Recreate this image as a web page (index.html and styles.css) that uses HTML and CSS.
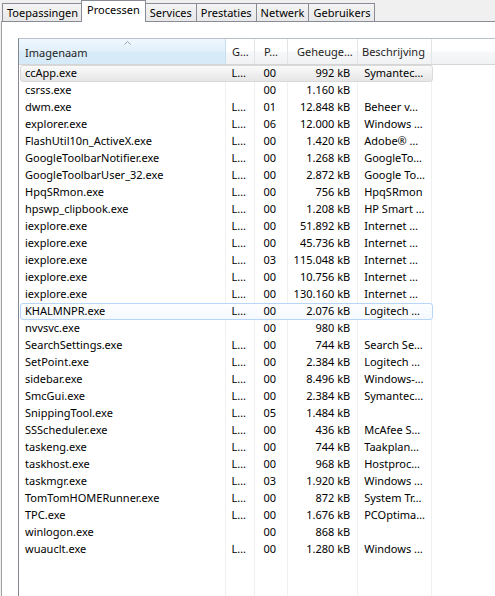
FILE: index.html
```html
<!DOCTYPE html>
<html>
<head>
<meta charset="utf-8">
<link rel="stylesheet" href="styles.css">
</head>
<body>
<div class="tabs">
  <div class="tab">Toepassingen</div>
  <div class="tab active">Processen</div>
  <div class="tab">Services</div>
  <div class="tab">Prestaties</div>
  <div class="tab">Netwerk</div>
  <div class="tab">Gebruikers</div>
</div>
<div class="panel">
  <div class="list">
    <div class="head">
      <div class="hc c1 sorted"><svg class="arrow" width="7" height="4" viewBox="0 0 7 4"><path d="M0.5 3.5 L3.5 0.5 L6.5 3.5" fill="none" stroke="#97a5b9" stroke-width="1"/></svg>Imagenaam</div>
      <div class="hc c2">G…</div>
      <div class="hc c3">P…</div>
      <div class="hc c4">Geheuge…</div>
      <div class="hc c5">Beschrijving</div>
      <div class="hc rest"></div>
    </div>
    <div class="body">
      <div class="row sel"><span class="c1">ccApp.exe</span><span class="c2">L…</span><span class="c3">00</span><span class="c4">992 kB</span><span class="c5">Symantec…</span></div>
      <div class="row"><span class="c1">csrss.exe</span><span class="c2"></span><span class="c3">00</span><span class="c4">1.160 kB</span><span class="c5"></span></div>
      <div class="row"><span class="c1">dwm.exe</span><span class="c2">L…</span><span class="c3">01</span><span class="c4">12.848 kB</span><span class="c5">Beheer v…</span></div>
      <div class="row"><span class="c1">explorer.exe</span><span class="c2">L…</span><span class="c3">06</span><span class="c4">12.000 kB</span><span class="c5">Windows …</span></div>
      <div class="row"><span class="c1">FlashUtil10n_ActiveX.exe</span><span class="c2">L…</span><span class="c3">00</span><span class="c4">1.420 kB</span><span class="c5">Adobe® …</span></div>
      <div class="row"><span class="c1">GoogleToolbarNotifier.exe</span><span class="c2">L…</span><span class="c3">00</span><span class="c4">1.268 kB</span><span class="c5">GoogleTo…</span></div>
      <div class="row"><span class="c1">GoogleToolbarUser_32.exe</span><span class="c2">L…</span><span class="c3">00</span><span class="c4">2.872 kB</span><span class="c5">Google To…</span></div>
      <div class="row"><span class="c1">HpqSRmon.exe</span><span class="c2">L…</span><span class="c3">00</span><span class="c4">756 kB</span><span class="c5">HpqSRmon</span></div>
      <div class="row"><span class="c1">hpswp_clipbook.exe</span><span class="c2">L…</span><span class="c3">00</span><span class="c4">1.208 kB</span><span class="c5">HP Smart …</span></div>
      <div class="row"><span class="c1">iexplore.exe</span><span class="c2">L…</span><span class="c3">00</span><span class="c4">51.892 kB</span><span class="c5">Internet …</span></div>
      <div class="row"><span class="c1">iexplore.exe</span><span class="c2">L…</span><span class="c3">00</span><span class="c4">45.736 kB</span><span class="c5">Internet …</span></div>
      <div class="row"><span class="c1">iexplore.exe</span><span class="c2">L…</span><span class="c3">03</span><span class="c4">115.048 kB</span><span class="c5">Internet …</span></div>
      <div class="row"><span class="c1">iexplore.exe</span><span class="c2">L…</span><span class="c3">00</span><span class="c4">10.756 kB</span><span class="c5">Internet …</span></div>
      <div class="row"><span class="c1">iexplore.exe</span><span class="c2">L…</span><span class="c3">00</span><span class="c4">130.160 kB</span><span class="c5">Internet …</span></div>
      <div class="row hover"><span class="c1">KHALMNPR.exe</span><span class="c2">L…</span><span class="c3">00</span><span class="c4">2.076 kB</span><span class="c5">Logitech …</span></div>
      <div class="row"><span class="c1">nvvsvc.exe</span><span class="c2"></span><span class="c3">00</span><span class="c4">980 kB</span><span class="c5"></span></div>
      <div class="row"><span class="c1">SearchSettings.exe</span><span class="c2">L…</span><span class="c3">00</span><span class="c4">744 kB</span><span class="c5">Search Se…</span></div>
      <div class="row"><span class="c1">SetPoint.exe</span><span class="c2">L…</span><span class="c3">00</span><span class="c4">2.384 kB</span><span class="c5">Logitech …</span></div>
      <div class="row"><span class="c1">sidebar.exe</span><span class="c2">L…</span><span class="c3">00</span><span class="c4">8.496 kB</span><span class="c5">Windows-…</span></div>
      <div class="row"><span class="c1">SmcGui.exe</span><span class="c2">L…</span><span class="c3">00</span><span class="c4">2.384 kB</span><span class="c5">Symantec…</span></div>
      <div class="row"><span class="c1">SnippingTool.exe</span><span class="c2">L…</span><span class="c3">05</span><span class="c4">1.484 kB</span><span class="c5"></span></div>
      <div class="row"><span class="c1">SSScheduler.exe</span><span class="c2">L…</span><span class="c3">00</span><span class="c4">436 kB</span><span class="c5">McAfee S…</span></div>
      <div class="row"><span class="c1">taskeng.exe</span><span class="c2">L…</span><span class="c3">00</span><span class="c4">744 kB</span><span class="c5">Taakplan…</span></div>
      <div class="row"><span class="c1">taskhost.exe</span><span class="c2">L…</span><span class="c3">00</span><span class="c4">968 kB</span><span class="c5">Hostproc…</span></div>
      <div class="row"><span class="c1">taskmgr.exe</span><span class="c2">L…</span><span class="c3">03</span><span class="c4">1.920 kB</span><span class="c5">Windows …</span></div>
      <div class="row"><span class="c1">TomTomHOMERunner.exe</span><span class="c2">L…</span><span class="c3">00</span><span class="c4">872 kB</span><span class="c5">System Tr…</span></div>
      <div class="row"><span class="c1">TPC.exe</span><span class="c2">L…</span><span class="c3">00</span><span class="c4">1.676 kB</span><span class="c5">PCOptima…</span></div>
      <div class="row"><span class="c1">winlogon.exe</span><span class="c2"></span><span class="c3">00</span><span class="c4">868 kB</span><span class="c5"></span></div>
      <div class="row"><span class="c1">wuauclt.exe</span><span class="c2">L…</span><span class="c3">00</span><span class="c4">1.280 kB</span><span class="c5">Windows …</span></div>
    </div>
  </div>
</div>
</body>
</html>
```

FILE: styles.css
```css
html, body {
  margin: 0;
  height: 100%;
  overflow: hidden;
}
body {
  background: #f0f0f0;
  font-family: "Segoe UI", "Noto Sans", sans-serif;
  font-size: 11px;
  color: #000;
  display: flex;
  flex-direction: column;
}
.tabs {
  display: flex;
  align-items: flex-end;
  height: 21px;
  padding-left: 2px;
  flex: none;
}
.tab {
  height: 17px;
  line-height: 17px;
  padding: 0 4px;
  border: 1px solid #898c95;
  border-bottom: none;
  margin-right: -1px;
  background: linear-gradient(#f4f4f4, #e8e8e8);
  white-space: nowrap;
}
.tab.active {
  height: 21px;
  line-height: 18px;
  background: #fff;
  margin: 0 -1px -1px -1px;
  padding: 0 5px;
  position: relative;
  z-index: 1;
}
.panel {
  flex: 1;
  background: #fff;
  border-top: 1px solid #898c95;
  border-left: 1px solid #a0a0a0;
  margin-left: 1px;
  padding: 16px 0 0 16px;
  display: flex;
}
.list {
  flex: 1;
  border-left: 1px solid #828790;
  border-top: 1px solid #b9c0c9;
  display: flex;
  flex-direction: column;
}
.head {
  display: flex;
  height: 25px;
  border-bottom: 1px solid #d5d5d5;
  flex: none;
}
.hc {
  background: linear-gradient(#ffffff 0%, #ffffff 45%, #f6f7f8 55%, #f1f2f4 100%);
  border-right: 1px solid #e3e4e7;
  line-height: 25px;
  padding-left: 6px;
  box-sizing: border-box;
  color: #1e1e1e;
  white-space: nowrap;
}
.hc.sorted {
  background: linear-gradient(#eef7fd 0%, #e3f1fb 45%, #d8ebf8 55%, #d6eaf8 100%);
  border-right: 1px solid #c5dff1;
  display: flex;
  flex-direction: column;
  line-height: normal;
}
.arrow {
  display: block;
  margin: 2px 0 0 99px;
}
.c1 { width: 207px; }
.c2 { width: 29px; }
.c3 { width: 33px; }
.c4 { width: 70px; }
.c5 { width: 74px; }
.hc.c3 { padding-left: 9px; }
.hc.c4 { padding-left: 9px; }
.hc.c5 { padding-left: 4px; }
.hc.rest { flex: 1; border-right: none; }
.body {
  flex: 1;
  background:
    linear-gradient(#f0f0f0, #f0f0f0) 206px 0 / 1px 100% no-repeat,
    linear-gradient(#f0f0f0, #f0f0f0) 235px 0 / 1px 100% no-repeat,
    linear-gradient(#f0f0f0, #f0f0f0) 268px 0 / 1px 100% no-repeat,
    linear-gradient(#f0f0f0, #f0f0f0) 338px 0 / 1px 100% no-repeat,
    linear-gradient(#f0f0f0, #f0f0f0) 412px 0 / 1px 100% no-repeat;
}
.row {
  display: flex;
  height: 17px;
  width: 413px;
  box-sizing: border-box;
  line-height: 14px;
  border: 1px solid transparent;
  border-radius: 3px;
  margin-left: 1px;
  white-space: nowrap;
}
.row span {
  display: block;
  box-sizing: border-box;
  overflow: hidden;
}
.row .c1 { width: 206px; padding-left: 4px; }
.row .c2 { padding-left: 5px; }
.row .c3 { padding-left: 8px; }
.row .c4 { text-align: right; padding-right: 8px; }
.row .c5 { padding-left: 6px; }
.row.sel {
  background: linear-gradient(#fafafa, #e6e6e6);
  border-color: #d9d9d9;
}
.row.hover {
  background: linear-gradient(#fdfeff, #f5f9fe);
  border-color: #b8d6fb;
}
```
